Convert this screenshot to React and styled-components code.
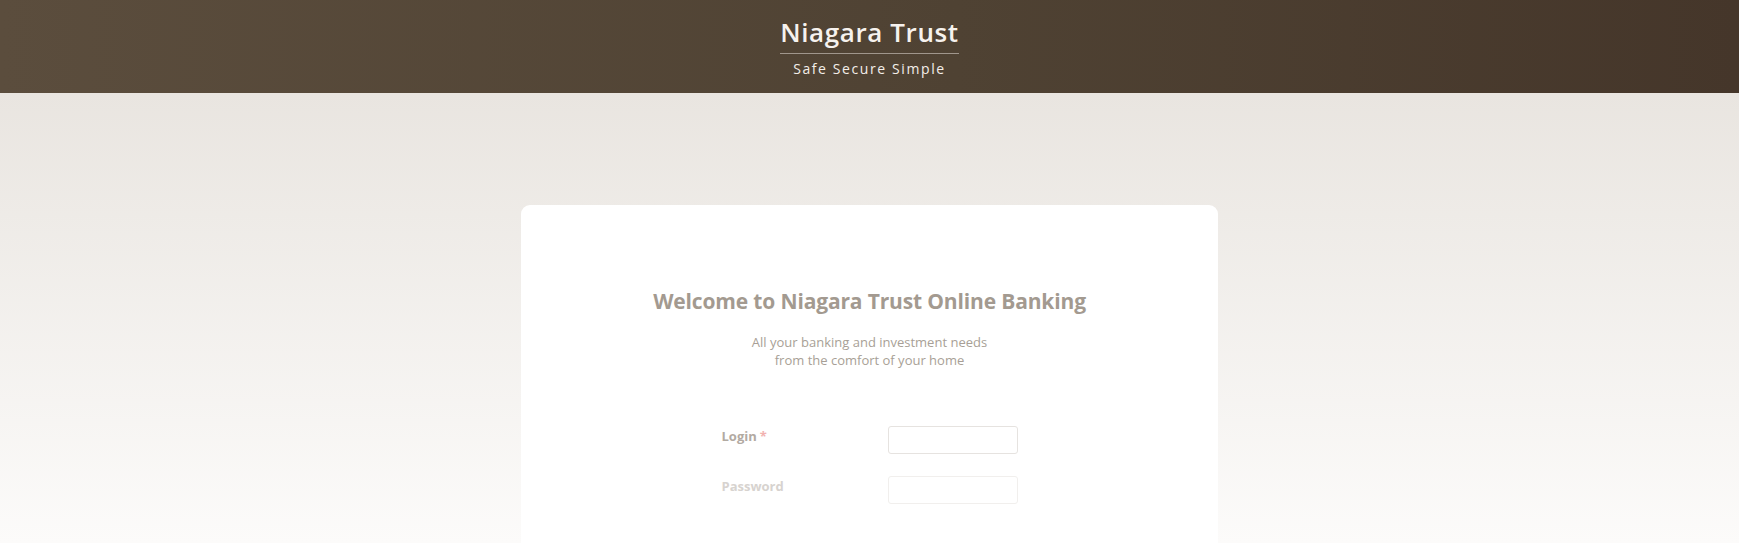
import React from 'react'
import styled, { createGlobalStyle } from 'styled-components'

const GlobalStyle = createGlobalStyle`
  html, body {
    margin: 0;
    padding: 0;
    height: 100%;
  }
  body {
    font-family: "Open Sans", "Liberation Sans", sans-serif;
    background: #fdfcfb;
  }
  #root {
    min-height: 100%;
  }
`

const Page = styled.div`
  min-height: 543px;
  display: flex;
  flex-direction: column;
  background: linear-gradient(180deg, #e9e5e0 93px, #fcfbfa 543px);
`

const Header = styled.header`
  height: 93px;
  box-sizing: border-box;
  background: linear-gradient(90deg, #5b4d3d 0%, #4f4233 55%, #45362a 100%);
  display: flex;
  justify-content: center;
  padding-top: 14px;
`

const Brand = styled.div`
  display: flex;
  flex-direction: column;
  align-items: center;
`

const BrandName = styled.h1`
  margin: 0;
  font-size: 26px;
  font-weight: 600;
  line-height: 36px;
  letter-spacing: 0.6px;
  color: #f6f2ee;
  padding-bottom: 3px;
  border-bottom: 1px solid #a0968c;
`

const Tagline = styled.div`
  margin-top: 6px;
  font-size: 14px;
  line-height: 18px;
  letter-spacing: 1.6px;
  color: #f3eee9;
`

const Main = styled.main`
  flex: 1;
  display: flex;
  justify-content: center;
  padding-top: 112px;
`

const Card = styled.section`
  width: 697px;
  background: #ffffff;
  border-radius: 9px 9px 0 0;
  display: flex;
  flex-direction: column;
  align-items: center;
  padding-top: 82px;
  padding-bottom: 40px;
`

const Title = styled.h2`
  margin: 0;
  font-size: 21px;
  font-weight: 700;
  line-height: 28px;
  letter-spacing: -0.15px;
  color: #a39a90;
`

const Intro = styled.p`
  margin: 18px 0 0;
  font-size: 13px;
  line-height: 18px;
  letter-spacing: 0;
  text-align: center;
  color: #a89f96;
`

const Form = styled.form`
  margin-top: 57px;
  width: 296px;
  display: flex;
  flex-direction: column;
  gap: 22px;
`

const Row = styled.div`
  display: grid;
  grid-template-columns: 1fr 130px;
  align-items: start;
`

const Label = styled.label`
  font-size: 13px;
  font-weight: 700;
  line-height: 18px;
  padding-top: 1px;
  color: ${(p) => (p.$faded ? '#d7d3cf' : '#b2aaa2')};
`

const Required = styled.span`
  color: #f2b2b0;
  margin-left: 3px;
`

const Input = styled.input`
  box-sizing: border-box;
  width: 130px;
  height: 28px;
  border: 1px solid ${(p) => (p.$faded ? '#f1efed' : '#e6e3e0')};
  border-radius: 3px;
  background: #ffffff;
  outline: none;
`

const App = () => {
  return (
    <>
      <GlobalStyle />
      <Page>
        <Header>
          <Brand>
            <BrandName>Niagara Trust</BrandName>
            <Tagline>Safe Secure Simple</Tagline>
          </Brand>
        </Header>
        <Main>
          <Card>
            <Title>Welcome to Niagara Trust Online Banking</Title>
            <Intro>
              All your banking and investment needs
              <br />
              from the comfort of your home
            </Intro>
            <Form onSubmit={(e) => e.preventDefault()}>
              <Row>
                <Label htmlFor='login'>
                  Login<Required>*</Required>
                </Label>
                <Input id='login' type='text' />
              </Row>
              <Row>
                <Label htmlFor='password' $faded>Password</Label>
                <Input id='password' type='password' $faded />
              </Row>
            </Form>
          </Card>
        </Main>
      </Page>
    </>
  )
}

export default App
